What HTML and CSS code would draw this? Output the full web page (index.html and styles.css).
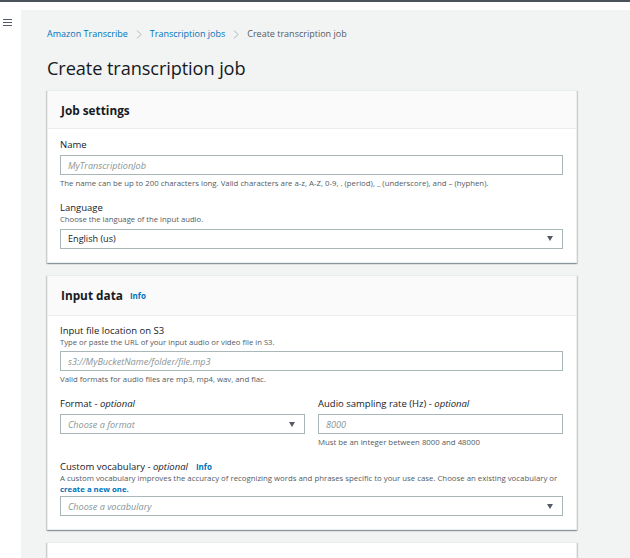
FILE: index.html
```html
<!DOCTYPE html>
<html>
<head>
<meta charset="utf-8">
<link rel="stylesheet" href="styles.css">
</head>
<body>
<div class="topline"></div>
<div class="layout">
  <nav class="sidenav">
    <svg class="burger" width="9" height="8" viewBox="0 0 9 8"><path d="M0 0.5H9M0 3.5H9M0 6.5H9" stroke="#545b64" stroke-width="1"/></svg>
  </nav>
  <main class="content">
    <div class="crumbs">
      <a class="crumb-link">Amazon Transcribe</a>
      <svg class="chev" width="6" height="9" viewBox="0 0 6 9"><path d="M1 0.5L5 4.5L1 8.5" fill="none" stroke="#aab7b8" stroke-width="1"/></svg>
      <a class="crumb-link">Transcription jobs</a>
      <svg class="chev" width="6" height="9" viewBox="0 0 6 9"><path d="M1 0.5L5 4.5L1 8.5" fill="none" stroke="#aab7b8" stroke-width="1"/></svg>
      <span class="crumb-current">Create transcription job</span>
    </div>
    <h1 class="title">Create transcription job</h1>

    <section class="card">
      <header class="card-head head-a"><h2>Job settings</h2></header>
      <div class="card-body body-a">
        <div class="label">Name</div>
        <div class="input"><span class="ph">MyTranscriptionJob</span></div>
        <div class="help">The name can be up to 200 characters long. Valid characters are a-z, A-Z, 0-9, . (period), _ (underscore), and – (hyphen).</div>
        <div class="label gap">Language</div>
        <div class="desc">Choose the language of the input audio.</div>
        <div class="input select"><span class="val">English (us)</span><span class="caret"></span></div>
      </div>
    </section>

    <section class="card">
      <header class="card-head head-b"><h2>Input data</h2><span class="info">Info</span></header>
      <div class="card-body body-b">
        <div class="label">Input file location on S3</div>
        <div class="desc">Type or paste the URL of your input audio or video file in S3.</div>
        <div class="input"><span class="ph">s3://MyBucketName/folder/file.mp3</span></div>
        <div class="help">Valid formats for audio files are mp3, mp4, wav, and flac.</div>
        <div class="cols">
          <div class="col">
            <div class="label">Format - <i>optional</i></div>
            <div class="input select"><span class="ph">Choose a format</span><span class="caret"></span></div>
          </div>
          <div class="col">
            <div class="label">Audio sampling rate (Hz) - <i>optional</i></div>
            <div class="input"><span class="ph">8000</span></div>
            <div class="help">Must be an integer between 8000 and 48000</div>
          </div>
        </div>
        <div class="label gap">Custom vocabulary - <i>optional</i><span class="info">Info</span></div>
        <div class="desc tight">A custom vocabulary improves the accuracy of recognizing words and phrases specific to your use case. Choose an existing vocabulary or <a class="link">create a new one.</a></div>
        <div class="input select near"><span class="ph">Choose a vocabulary</span><span class="caret"></span></div>
      </div>
    </section>

    <section class="card stub"></section>
  </main>
</div>
</body>
</html>
```
FILE: styles.css
```css
* { box-sizing: border-box; }
html, body { margin: 0; padding: 0; }
body {
  background: #ffffff;
  font-family: "Open Sans", "Noto Sans", sans-serif;
  color: #16191f;
  width: 630px;
  height: 558px;
  overflow: hidden;
}
.topline { height: 2px; background: #4a525c; margin-bottom: 8px; }
.layout { display: flex; height: 548px; }
.sidenav { width: 21px; flex: none; background: #fff; padding: 9px 0 0 3px; }
.burger { display: block; }
.content {
  flex: 1;
  background: #f2f3f3;
  padding: 18px 0 0 26px;
}
.crumbs { display: flex; align-items: center; height: 12px; font-size: 9px; line-height: 12px; }
.crumb-link { color: #0073bb; }
.chev { margin: 0 8px 0 8px; }
.crumb-current { color: #545b64; }
.title {
  margin: 15px 0 9px 0;
  font-size: 18.2px;
  line-height: 26px;
  font-weight: 400;
  color: #16191f;
  letter-spacing: -0.1px;
}
.card {
  width: 530px;
  background: #fff;
  border: 1px solid #eaeded;
  box-shadow: 0 1px 1px 0 rgba(0,28,36,.25), 1px 1px 1px 0 rgba(0,28,36,.12), -1px 1px 1px 0 rgba(0,28,36,.12);
  margin-bottom: 12px;
}
.card-head {
  background: #fafafa;
  border-bottom: 1px solid #eaeded;
  padding: 0 13px;
  display: flex;
  align-items: center;
}
.head-a { height: 38px; }
.head-b { height: 40px; }
.card-head h2 { margin: 0; font-size: 11.8px; font-weight: 700; color: #16191f; }
.info { color: #0073bb; font-weight: 700; font-size: 8px; margin-left: 7px; }
.card-body { padding: 0 13px 13px 12px; }
.body-a { padding-top: 10px; }
.body-b { padding-top: 9px; }
.label { font-size: 9.5px; line-height: 12px; color: #16191f; }
.label i { font-style: italic; }
.label .info { margin-left: 8px; }
.gap { margin-top: 13px; }
.desc { font-size: 7.7px; line-height: 11.5px; color: #545b64; }
.desc.tight { line-height: 11px; font-size: 7.8px; }
.link { color: #0073bb; font-weight: 700; }
.input {
  margin-top: 3px;
  height: 20px;
  border: 1px solid #aab7b8;
  background: #fff;
  display: flex;
  align-items: center;
  padding: 0 9px 0 7px;
  font-size: 9.1px;
}
.body-a > .label:first-child + .input { margin-top: 4px; }
.cols .input { margin-top: 4px; }
.input.near { margin-top: 1px; }
.ph { color: #879596; font-style: italic; }
.val { color: #16191f; }
.select { justify-content: space-between; }
.caret {
  width: 0; height: 0;
  border-left: 3.5px solid transparent;
  border-right: 3.5px solid transparent;
  border-top: 5px solid #545b64;
}
.help { margin-top: 2px; font-size: 7.8px; line-height: 12px; color: #545b64; }
.cols { display: grid; grid-template-columns: 1fr 1fr; column-gap: 13px; margin-top: 13px; }
.stub { height: 40px; }
```
